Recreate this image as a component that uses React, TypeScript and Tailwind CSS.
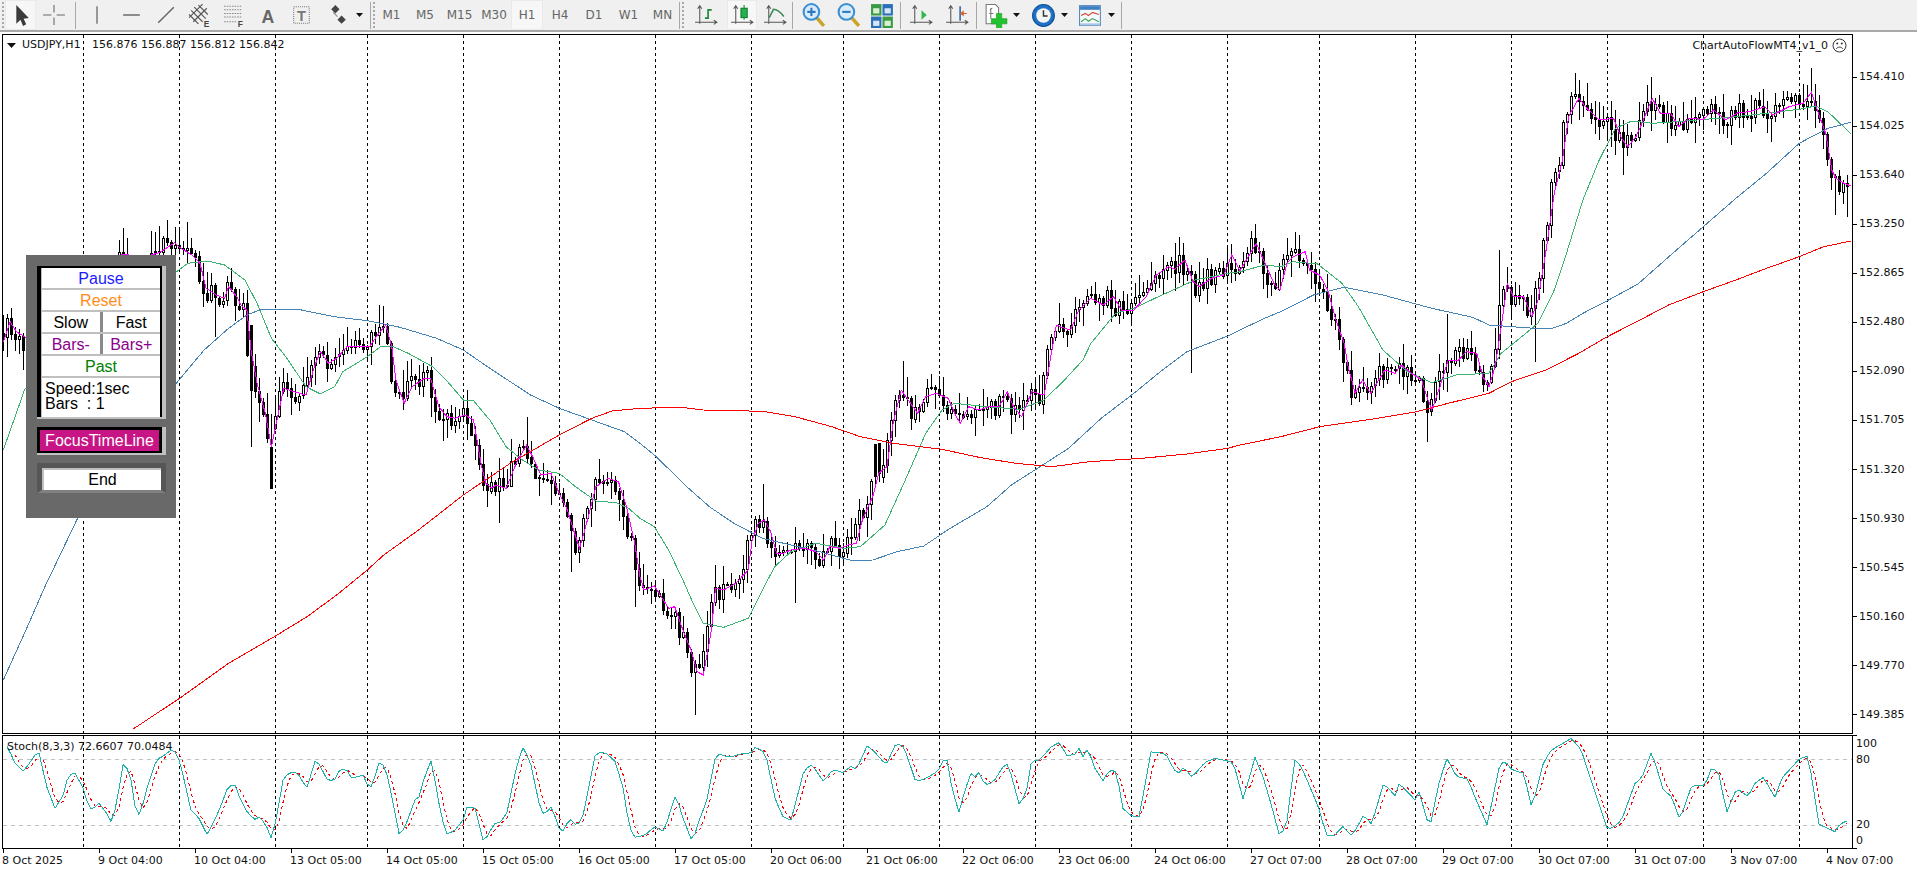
import React from "react";

type P = [number, number];
const Z8 = (a: number[]) => toPts(a, (x, y) => [x / 2.45, y / 3 + 210]);
const Z9 = (a: number[]) => toPts(a, (x, y) => [x / 2.45 + 640, y / 3 + 210]);
const Z10 = (a: number[]) => toPts(a, (x, y) => [x / 2.45 + 1240, y / 3 + 60]);
const Z5 = (a: number[]) => toPts(a, (x, y) => [x / 3, y / 3 + 720]);
const Z11 = (a: number[]) => toPts(a, (x, y) => [x / 2.529 + 380, y / 3 + 730]);
const Z12 = (a: number[]) => toPts(a, (x, y) => [x / 2.529 + 1000, y / 3 + 730]);
const Z6 = (a: number[]) => toPts(a, (x, y) => [x / 3 + 1600, y / 3 + 720]);
function toPts(a: number[], f: (x: number, y: number) => P): P[] {
  const r: P[] = [];
  for (let i = 0; i < a.length; i += 2) r.push(f(a[i], a[i + 1]));
  return r;
}

const pink: P[] = [
  ...Z8([8,395,25,335,40,365,60,380,100,420,260,420,282,200,298,132,315,132,330,195,355,195,370,135,390,128,428,98,440,112,470,135,490,160,505,235,530,255,550,265,560,230,580,260,590,285,605,300,615,420,630,520,650,610,665,710,680,620,695,535,720,545,750,555,770,470,785,425,805,460,825,445,850,410,880,410,905,410,925,375,945,345,960,410,970,510,990,580,1010,530,1040,505,1055,505,1075,590,1095,620,1115,625,1140,615,1160,630,1180,770,1190,820,1205,835,1215,825,1240,835,1265,760,1290,705,1305,740,1325,795,1350,790,1370,850,1390,900,1405,960,1420,1015,1435,950,1460,830,1490,805,1515,815,1535,890,1555,1000]),
  ...Z9([0,1100,10,1140,35,1128,55,1165,70,1195,85,1190,105,1260,125,1320,140,1385,155,1395,165,1330,175,1260,185,1135,205,1140,235,1120,265,1080,275,990,290,940,305,930,320,965,335,1030,350,1030,370,1020,405,1015,430,1025,450,1050,465,1010,490,1015,510,1005,530,1000,545,930,570,860,585,790,605,770,620,640,640,540,660,575,680,610,700,560,725,550,755,565,775,620,785,640,805,590,830,600,855,590,880,590,900,545,915,590,935,620,960,545,990,555,1005,450,1020,345,1040,355,1055,360,1075,300,1105,265,1135,285,1160,260,1180,300,1210,300,1240,260,1265,195,1295,170,1310,178,1335,150,1355,215,1370,230,1400,205,1430,195,1450,135,1470,182,1510,100,1535,170,1555,225]),
  ...Z10([98,690,115,610,130,590,160,575,170,630,195,645,215,690,235,780,255,850,265,920,282,1000,300,960,320,1000,340,960,355,930,380,940,395,915,420,940,445,960,455,1000,470,1050,490,980,510,900,535,900,555,875,580,880,595,950,610,980,625,920,640,800,655,670,670,710,695,710,715,770,730,720,750,570,770,400,790,300,805,170,830,115,850,145,880,180,915,175,935,235,950,260,970,230,985,190,1010,115,1030,160,1055,160,1075,200,1100,175,1135,178,1160,150,1190,180,1220,158,1250,155,1285,140,1305,165,1345,140,1380,130,1400,97,1420,170,1435,220,1450,330,1460,355,1480,370,1497,378]),
];
const green: P[] = [
  ...Z8([8,720,60,540,190,300,300,220,435,183,460,160,510,153,550,165,600,210,630,280,665,385,700,440,750,530,785,552,820,530,840,485,900,440,935,408,960,408,1000,430,1060,470,1100,520,1135,570,1160,572,1200,630,1240,710,1280,750,1320,780,1370,790,1410,830,1460,873,1510,878,1540,895]),
  ...Z9([0,925,35,950,70,1020,105,1110,130,1180,155,1240,205,1252,265,1225,300,1140,330,1070,370,1025,430,1000,500,1015,540,1010,600,945,650,810,700,670,740,600,770,580,850,590,930,598,990,570,1040,510,1085,450,1105,400,1165,310,1210,295,1270,260,1360,210,1440,190]),
  ...Z10([0,635,60,615,100,620,130,605,190,612,250,670,290,740,350,870,410,935,470,968,530,945,610,940,640,880,680,840,730,790,770,690,800,580,840,420,880,300,920,205,960,183,1010,190,1070,185,1140,178,1200,172,1290,160,1370,148,1410,138,1440,155,1470,190,1497,222]),
];
const blue: P[] = [
  ...Z8([8,1410,60,1270,110,1130,190,925,435,515,500,420,560,355,605,315,640,298,730,298,820,320,900,332,980,352,1070,385,1135,420,1200,475,1300,555,1370,595,1450,630,1530,665]),
  ...Z9([0,700,40,740,110,825,170,890,230,940,300,985,370,1005,440,1025,520,1052,570,1050,630,1025,695,1008,760,955,850,890,910,825,980,770,1050,715,1130,625,1210,550,1280,480,1340,425,1440,378]),
  ...Z10([0,810,60,775,105,752,180,705,255,682,350,705,470,745,570,772,610,795,720,805,765,805,800,790,840,760,900,722,975,672,1060,580,1135,500,1215,415,1290,340,1370,250,1440,205,1497,187]),
];
const red: P[] = [
  ...Z8([325,1558,440,1465,560,1360,675,1278,755,1218,830,1150,900,1080,940,1035,1020,965,1135,855,1250,760,1370,675,1450,625,1500,603]),
  ...Z9([0,595,100,592,155,600,300,604,380,620,470,650,540,680,620,700,740,718,830,742,920,760,1010,770,1100,755,1230,745,1340,732,1440,715]),
  ...Z10([0,1155,100,1130,195,1100,310,1080,430,1056,510,1030,610,1000,665,965,750,930,830,880,900,830,980,780,1050,735,1135,695,1215,660,1290,625,1370,590,1430,560,1497,543]),
];
const stochK: P[] = [
  ...Z5([10,65,25,85,45,130,70,155,95,120,115,90,140,200,165,265,190,225,205,165,225,160,250,205,265,258,275,270,297,250,320,280,335,308,350,250,370,128,390,160,408,278,420,285,445,190,470,118,490,108,520,85,540,125,575,280,590,282,622,345,660,265,685,198,705,195,720,235,745,282,765,298,780,290,800,320,815,358,830,290,850,175,865,160,890,155,920,205,948,115,985,185,1010,175,1020,145,1040,150,1055,175,1090,165,1105,202,1115,200]),
  ...Z11([0,90,15,120,30,200,50,322,70,270,90,205,100,200,110,150,130,90,155,260,170,313,190,300,210,270,220,232,240,233,262,337,290,280,305,278,322,245,345,110,362,52,380,95,405,235,415,255,435,228,450,290,462,305,480,265,495,285,510,275,525,190,545,70,570,67,595,95,615,175,630,290,645,322,670,315,695,290,718,305,748,193,765,260,790,337,810,260,825,220,850,70,885,82,910,72,940,68,950,50,975,70,1000,210,1020,262,1040,270,1072,122,1092,103,1122,155,1145,118,1170,128,1192,108,1205,118,1232,47,1250,65,1280,105,1305,40,1325,50,1355,155,1375,148,1410,125,1425,90,1435,90,1447,180,1465,248,1478,185,1495,130,1505,140,1515,128,1530,165,1550,158]),
  ...Z12([0,125,15,97,25,120,50,230,70,170,80,90,100,90,130,50,150,38,170,78,190,72,200,55,210,80,222,55,240,115,262,155,275,120,295,125,310,235,335,260,352,260,382,65,420,72,440,120,455,130,465,110,485,142,520,95,545,85,590,97,615,208,645,82,665,140,685,220,708,322,725,280,745,90,760,105,780,160,805,230,825,315,850,315,865,287,890,318,920,255,940,283,970,160,1000,198,1010,160,1050,210,1060,185,1080,270,1090,275,1110,160,1130,85,1155,140,1185,148,1195,185,1232,285,1262,115,1275,90,1295,120,1325,130,1345,235,1375,95,1395,60,1445,25,1470,60,1500,170,1537,300]),
  ...Z6([45,318,65,300,105,190,125,175,155,95,190,210,215,230,240,300,275,197,315,197,335,143,355,155,380,277,410,205,445,230,465,190,490,172,525,232,545,175,600,115,625,108,657,313,705,335,720,312,752,298]),
];

function at(pts: P[], x: number): number {
  if (x <= pts[0][0]) return pts[0][1];
  for (let i = 1; i < pts.length; i++) {
    if (x <= pts[i][0]) {
      const [x0, y0] = pts[i - 1];
      const [x1, y1] = pts[i];
      return y0 + ((y1 - y0) * (x - x0)) / Math.max(x1 - x0, 0.001);
    }
  }
  return pts[pts.length - 1][1];
}
const poly = (pts: P[]) => pts.map((p) => `${p[0].toFixed(1)},${p[1].toFixed(1)}`).join(" ");

function rng(seed: number) {
  return () => {
    seed |= 0;
    seed = (seed + 0x6d2b79f5) | 0;
    let t = Math.imul(seed ^ (seed >>> 15), 1 | seed);
    t = (t + Math.imul(t ^ (t >>> 7), 61 | t)) ^ t;
    return ((t ^ (t >>> 14)) >>> 0) / 4294967296;
  };
}

const BARS = 462;
const xOf = (i: number) => 3 + 4 * i;
const extremes: P[] = [[123,228],[119,240],[127,238],[151,235],[156,232],[160,226],[167,229],[188,222],[215,337],[251,447],[380,305],[500,523],[527,417],[571,572],[636,607],[694,715],[763,484],[795,603],[903,361],[1191,373],[1255,224],[1428,442],[1447,314],[1499,250],[1535,362],[1575,73],[1624,175],[1651,77],[1667,143],[1771,142],[1811,68],[1836,215],[1848,217]];
const bodyOverride: [number, number, number][] = [[251,325,390],[271,447,488],[876,444,476],[880,443,473]];

function buildCandles() {
  const r = rng(20251104);
  const o: number[] = [], c: number[] = [], h: number[] = [], l: number[] = [];
  for (let i = 0; i < BARS; i++) {
    const x = xOf(i);
    const raw = at(pink, x + 4) + (r() - 0.5) * 19;
    const cl = x > 20 && x < 118 ? 350 : x > 128 && x < 148 ? Math.max(raw, 285) : raw;
    const op = i === 0 ? cl - 4 : c[i - 1];
    c.push(cl);
    o.push(op);
    const a = r(), b = r();
    h.push(Math.min(op, cl) - a * a * 20 - 2);
    l.push(Math.max(op, cl) + b * b * 20 + 2);
  }
  for (const [x, top, bot] of bodyOverride) {
    const i = Math.round((x - 3) / 4);
    o[i] = top; c[i] = bot;
    h[i] = Math.min(h[i], top); l[i] = Math.max(l[i], bot);
  }
  for (const [x, y] of extremes) {
    const i = Math.round((x - 3) / 4);
    if (y < (o[i] + c[i]) / 2) h[i] = Math.min(h[i], y);
    else l[i] = Math.max(l[i], y);
  }
  let wicks = "", bull = "", bear = "";
  for (let i = 0; i < BARS; i++) {
    const X = xOf(i) + 0.5;
    wicks += `M${X} ${Math.round(h[i])}V${Math.round(l[i])}`;
    const t = Math.round(Math.min(o[i], c[i])) + 0.5;
    const hh = Math.max(Math.round(Math.abs(o[i] - c[i])), 1);
    const d = `M${X - 1} ${t}h2v${hh}h-2z`;
    if (c[i] < o[i]) bull += d; else bear += d;
  }
  return { wicks, bull, bear };
}
const candles = buildCandles();

const kPts: P[] = [];
const dPts: P[] = [];
for (let i = 0; i < BARS; i++) {
  const x = xOf(i);
  if (x < 4) continue;
  const k = at(stochK, x);
  kPts.push([x, k]);
  if (i > 2) dPts.push([x, (at(stochK, x) + at(stochK, x - 4) + at(stochK, x - 8)) / 3]);
}

const seps = [83,179,275,367,463,559,655,751,843,939,1035,1131,1227,1319,1415,1511,1607,1703,1799];
const prices = ["154.410","154.025","153.640","153.250","152.865","152.480","152.090","151.705","151.320","150.930","150.545","150.160","149.770","149.385"];
const dates = ["8 Oct 2025","9 Oct 04:00","10 Oct 04:00","13 Oct 05:00","14 Oct 05:00","15 Oct 05:00","16 Oct 05:00","17 Oct 05:00","20 Oct 06:00","21 Oct 06:00","22 Oct 06:00","23 Oct 06:00","24 Oct 06:00","27 Oct 07:00","28 Oct 07:00","29 Oct 07:00","30 Oct 07:00","31 Oct 07:00","3 Nov 07:00","4 Nov 07:00"];

const Axes = () => (
  <g stroke="#555" strokeWidth="1" fill="none">
    <path d="M6.5 4V21M4.5 6.5L6.5 3.5L8.5 6.5M2 19.5H23M20 17.5L23 19.5L20 21.5" />
  </g>
);

const icons: Record<string, React.ReactNode> = {
  cursor: <path d="M8 3L8 21L12 17L14.5 23L17.5 21.5L15 16L20 15.5Z" fill="#3a3a3a" />,
  cross: <path d="M12.5 3V10M12.5 15V22M2 12.5H10M15 12.5H23" stroke="#666" fill="none" />,
  vline: <path d="M12.5 4V21" stroke="#777" strokeWidth="1.4" />,
  hline: <path d="M4 12.5H20" stroke="#666" strokeWidth="1.4" />,
  trend: <path d="M5 20L20 5" stroke="#666" strokeWidth="1.4" />,
  channel: (
    <g>
      <path d="M2 15L15 2M6 19L19 6M4 8L15 19M7 5L18 16M2 12L11 21M11 3L20 12" stroke="#555" strokeWidth="1.1" fill="none" />
      <text x="16" y="24" fontSize="8" fontWeight="700" fill="#444" fontFamily="Liberation Sans">E</text>
    </g>
  ),
  fibo: (
    <g>
      <path d="M3 4H20M3 7.5H20M3 11H20M3 14.5H20M3 19H15" stroke="#888" strokeDasharray="1.5 1" fill="none" />
      <text x="16" y="24" fontSize="8" fontWeight="700" fill="#444" fontFamily="Liberation Sans">F</text>
    </g>
  ),
  letter: <text x="12.5" y="20" textAnchor="middle" fontSize="17" fontWeight="700" fill="#666" fontFamily="Liberation Sans">A</text>,
  textbox: (
    <g>
      <rect x="4.5" y="4.5" width="15" height="16" fill="none" stroke="#777" strokeDasharray="1 1" />
      <text x="12" y="18" textAnchor="middle" fontSize="14" fontWeight="700" fill="#777" fontFamily="Liberation Sans">T</text>
    </g>
  ),
  arrows: (
    <g>
      <path d="M9 3L13 7L9 11L5 7Z" fill="#444" />
      <path d="M15 13L19 17L15 21L11 17Z" fill="#444" />
      <path d="M7 10L11 14" stroke="#888" />
    </g>
  ),
  bar: (
    <g>
      <Axes />
      <path d="M11.5 15.5H14.5V7.5H18" stroke="#1a8a3a" strokeWidth="1.6" fill="none" />
    </g>
  ),
  candle: (
    <g>
      <Axes />
      <path d="M14.5 3V17" stroke="#0f7a2c" />
      <rect x="11.5" y="6" width="6" height="9" fill="#22b14c" stroke="#0f7a2c" />
    </g>
  ),
  line: (
    <g>
      <Axes />
      <path d="M7 15L11 7C14 7 18 10 21 14" stroke="#3c8a55" strokeWidth="1.5" fill="none" />
    </g>
  ),
  zoomIn: (
    <g>
      <path d="M15 15L22 23" stroke="#c9a428" strokeWidth="3.4" />
      <circle cx="10" cy="9.5" r="7.5" fill="#d8ecfb" stroke="#3c8fd0" strokeWidth="2" />
      <path d="M6 9.5H14M10 5.5V13.5" stroke="#2d78c0" strokeWidth="2" />
    </g>
  ),
  zoomOut: (
    <g>
      <path d="M15 15L22 23" stroke="#c9a428" strokeWidth="3.4" />
      <circle cx="10" cy="9.5" r="7.5" fill="#d8ecfb" stroke="#3c8fd0" strokeWidth="2" />
      <path d="M6 9.5H14" stroke="#2d78c0" strokeWidth="2" />
    </g>
  ),
  tile: (
    <g>
      <rect x="1" y="2" width="10" height="11" fill="#3a9a46" />
      <rect x="12" y="2" width="10" height="11" fill="#2a6fb8" />
      <rect x="1" y="14" width="10" height="11" fill="#2a6fb8" />
      <rect x="12" y="14" width="10" height="11" fill="#3a9a46" />
      <rect x="3" y="6" width="6" height="5" fill="#d6f0d0" />
      <rect x="14" y="6" width="6" height="5" fill="#d5e6f7" />
      <rect x="3" y="18" width="6" height="5" fill="#d5e6f7" />
      <rect x="14" y="18" width="6" height="5" fill="#d6f0d0" />
    </g>
  ),
  autoscroll: (
    <g>
      <Axes />
      <path d="M13 8L18 12.5L13 17Z" fill="#2fb84f" />
    </g>
  ),
  shift: (
    <g>
      <Axes />
      <path d="M15.5 4V18" stroke="#3a6ea8" strokeWidth="1.6" />
      <path d="M22 10.5H19V8L15.5 11L19 14V11.5H22Z" fill="#d9602a" />
    </g>
  ),
  newChart: (
    <g>
      <path d="M3 2.5H12L15 5.5V21H3Z" fill="#fff" stroke="#777" />
      <path d="M7 8C7 6 9 6 9 6M6 11H10M7.5 6V16" stroke="#777" fill="none" />
      <path d="M13 11H18V16H23V21H18V26H13V21H8V16H13Z" fill="#22c32e" stroke="#149a20" strokeWidth="0.6" />
    </g>
  ),
  clock: (
    <g>
      <circle cx="12" cy="13" r="10.5" fill="#1f6fc4" stroke="#0e4f97" />
      <circle cx="12" cy="13" r="7" fill="#f4f4f4" />
      <path d="M12 8V13.5H16" stroke="#333" strokeWidth="1.4" fill="none" />
    </g>
  ),
  indicator: (
    <g>
      <rect x="1.5" y="3.5" width="20" height="19" fill="#f4f8fc" stroke="#4f86bd" />
      <rect x="2" y="4" width="19" height="3.5" fill="#3d7fc4" />
      <path d="M3 13L7 11L10 13L14 10L20 12" stroke="#d6492b" fill="none" />
      <path d="M3 19L7 16L10 18.5L14 16L20 19" stroke="#3aa34a" fill="none" />
      <rect x="2" y="20.5" width="19" height="2" fill="#a9c7e6" />
    </g>
  ),
};

function Icon({ name, size = 26 }: { name: string; size?: number }) {
  return (
    <svg width={size} height={size} viewBox="0 0 25 25" className="shrink-0">
      {icons[name]}
    </svg>
  );
}
const Caret = () => (
  <svg width="7" height="4" viewBox="0 0 7 4" className="ml-[4px] shrink-0">
    <path d="M0 0H7L3.5 4Z" fill="#111" />
  </svg>
);
const Sep = () => <div className="h-[27px] w-px shrink-0 bg-[#a8a8a8]" />;
const Grip = () => <div className="ml-[2px] h-[26px] w-[2px] shrink-0 border-l-2 border-dotted border-[#a9a9a9]" />;

function Btn({ w, active, children }: { w: string; active?: boolean; children: React.ReactNode }) {
  return (
    <div
      className={
        "flex h-[30px] shrink-0 items-center justify-center " +
        w +
        (active ? " border border-[#eaeaea] bg-[#f7f7f7]" : "")
      }
    >
      {children}
    </div>
  );
}
function TF({ t, w, active }: { t: string; w: string; active?: boolean }) {
  return (
    <Btn w={w} active={active}>
      <span className="text-[12px] text-[#666]">{t}</span>
    </Btn>
  );
}

function Toolbar() {
  return (
    <div className="flex h-[30px] items-center bg-[#f0f0f0]">
      <Grip />
      <div className="w-[1px]" />
      <Btn w="w-[31px]" active><Icon name="cursor" /></Btn>
      <Btn w="w-[36px]"><Icon name="cross" /></Btn>
      <div className="w-[3px]" />
      <Sep />
      <div className="w-[2px]" />
      <Btn w="w-[37px]"><Icon name="vline" /></Btn>
      <Btn w="w-[34px]"><Icon name="hline" /></Btn>
      <Btn w="w-[34px]"><Icon name="trend" /></Btn>
      <Btn w="w-[34px]"><Icon name="channel" /></Btn>
      <Btn w="w-[34px]"><Icon name="fibo" /></Btn>
      <Btn w="w-[34px]"><Icon name="letter" /></Btn>
      <Btn w="w-[34px]"><Icon name="textbox" /></Btn>
      <Btn w="w-[51px]"><Icon name="arrows" /><Caret /></Btn>
      <Sep />
      <Grip />
      <Btn w="w-[33px]"><span className="text-[12px] text-[#666]">M1</span></Btn>
      <TF t="M5" w="w-[34px]" />
      <TF t="M15" w="w-[35px]" />
      <TF t="M30" w="w-[34px]" />
      <TF t="H1" w="w-[32px]" active />
      <TF t="H4" w="w-[34px]" />
      <TF t="D1" w="w-[34px]" />
      <TF t="W1" w="w-[35px]" />
      <TF t="MN" w="w-[33px]" />
      <Sep />
      <Grip />
      <div className="w-[1px]" />
      <Btn w="w-[42px]"><Icon name="bar" /></Btn>
      <Btn w="w-[30px]" active><Icon name="candle" /></Btn>
      <Btn w="w-[35px]"><Icon name="line" /></Btn>
      <Sep />
      <div className="w-[3px]" />
      <Btn w="w-[36px]"><Icon name="zoomIn" /></Btn>
      <Btn w="w-[34px]"><Icon name="zoomOut" /></Btn>
      <Btn w="w-[34px]"><Icon name="tile" /></Btn>
      <Sep />
      <div className="w-[1px]" />
      <Btn w="w-[37px]"><Icon name="autoscroll" /></Btn>
      <Btn w="w-[35px]"><Icon name="shift" /></Btn>
      <div className="w-[2px]" />
      <Sep />
      <Btn w="w-[49px]"><Icon name="newChart" /><Caret /></Btn>
      <Btn w="w-[47px]"><Icon name="clock" /><Caret /></Btn>
      <Btn w="w-[47px]"><Icon name="indicator" /><Caret /></Btn>
      <div className="w-[1px]" />
      <Sep />
    </div>
  );
}

function PanelRow({ color, children }: { color: string; children: React.ReactNode }) {
  return (
    <div className={"flex h-[20px] items-center justify-center bg-white pt-px text-[16px] leading-none " + color}>
      {children}
    </div>
  );
}

function ControlPanel() {
  return (
    <div className="absolute left-[23px] top-[220px] flex h-[263px] w-[150px] flex-col bg-[#696969] pl-[11px] pr-[10px] pt-[11px] font-['Liberation_Sans',sans-serif]">
      <div className="flex flex-col border-b-2 border-r-[4px] border-b-[#c0c0c0] border-r-[#c0c0c0]">
        <div className="border-l-[4px] border-r-[2px] border-t-2 border-black bg-[#c0c0c0]">
          <div className="flex flex-col gap-[2px] pl-px">
            <PanelRow color="text-[#1c1cff]">Pause</PanelRow>
            <PanelRow color="text-[#ff8c1a]">Reset</PanelRow>
            <div className="grid grid-cols-2 gap-[3px] bg-[#8a8a8a]">
              <PanelRow color="text-black">Slow</PanelRow>
              <PanelRow color="text-black">Fast</PanelRow>
            </div>
            <div className="grid grid-cols-2 gap-[3px] bg-[#8a8a8a]">
              <PanelRow color="text-[#8b008b]">Bars-</PanelRow>
              <PanelRow color="text-[#8b008b]">Bars+</PanelRow>
            </div>
            <PanelRow color="text-[#008000]">Past</PanelRow>
            <div className="flex h-[39px] flex-col bg-white pl-[3px] pt-[3px] text-[16px] leading-[15px] text-black">
              <span>Speed:1sec</span>
              <span className="whitespace-pre">Bars  : 1</span>
            </div>
          </div>
        </div>
      </div>
      <div className="mt-[8px] flex h-[28px] flex-col border-b-2 border-r-[4px] border-b-[#c0c0c0] border-r-[#c0c0c0]">
        <div className="flex flex-1 items-center justify-center border-[3px] border-b-2 border-black bg-[#c71585] text-[16px] text-white">
          FocusTimeLine
        </div>
      </div>
      <div className="mt-[8px] flex h-[30px] border-x-[5px] border-b-[3px] border-t-[5px] border-x-[#565656] border-b-[#808080] border-t-[#565656]">
        <div className="flex flex-1 items-center justify-center border-l-2 border-t-2 border-[#c0c0c0] bg-white text-[16px] text-black">
          End
        </div>
      </div>
    </div>
  );
}

export default function App() {
  return (
    <div className="h-[871px] w-[1917px] overflow-hidden bg-white font-['DejaVu_Sans',sans-serif] text-[11px] leading-[14px] text-[#111]">
      <Toolbar />
      <div className="h-[2px] bg-[#a9a9a9]" />
      <div className="h-[2px]" />
      <div className="flex pl-[2px]">
        <div className="flex w-[1851px] shrink-0 flex-col">
          <div className="relative h-[700px] w-[1851px] border border-black">
            <svg className="absolute inset-0 h-full w-full" viewBox="3 35 1849 698">
              <g stroke="#000" strokeDasharray="3 3" shapeRendering="crispEdges">
                {seps.map((x) => (
                  <line key={x} x1={x + 0.5} x2={x + 0.5} y1={35} y2={733} />
                ))}
              </g>
              <g shapeRendering="crispEdges">
                <path d={candles.wicks} stroke="#000" fill="none" />
                <path d={candles.bear} stroke="#000" fill="#000" />
                <path d={candles.bull} stroke="#000" fill="#fff" />
              </g>
              <g fill="none" shapeRendering="crispEdges">
                <polyline points={poly(green)} stroke="#3cb371" />
                <polyline points={poly(blue)} stroke="#4682b4" />
                <polyline points={poly(red)} stroke="#ff0000" />
                <polyline points={poly(pink)} stroke="#ff00ff" />
              </g>
            </svg>
            <div className="absolute left-[4px] top-[3px] flex items-center">
              <svg width="9" height="5" viewBox="0 0 9 5" className="mr-[6px]">
                <path d="M0 0H9L4.5 5Z" fill="#111" />
              </svg>
              <span className="w-[70px]">USDJPY,H1</span>
              <span>156.876 156.887 156.812 156.842</span>
            </div>
            <div className="absolute right-[5px] top-[3px] flex items-center gap-[4px]">
              <span>ChartAutoFlowMT4_v1_0</span>
              <svg width="15" height="15" viewBox="0 0 15 15">
                <circle cx="7.5" cy="7.5" r="6.5" fill="none" stroke="#333" />
                <circle cx="5.2" cy="5.6" r="1" fill="#333" />
                <circle cx="9.8" cy="5.6" r="1" fill="#333" />
                <path d="M4.3 10.8C5.4 8.6 9.6 8.6 10.7 10.8" fill="none" stroke="#333" />
              </svg>
            </div>
            <ControlPanel />
          </div>
          <div className="h-px" />
          <div className="relative h-[114px] w-[1851px] border border-black">
            <svg className="absolute inset-0 h-full w-full" viewBox="3 736 1849 112">
              <g stroke="#c0c0c0" strokeDasharray="4 4" shapeRendering="crispEdges">
                <line x1="3" x2="1852" y1="759.5" y2="759.5" />
                <line x1="3" x2="1852" y1="825.5" y2="825.5" />
              </g>
              <g stroke="#000" strokeDasharray="3 3" shapeRendering="crispEdges">
                {seps.map((x) => (
                  <line key={x} x1={x + 0.5} x2={x + 0.5} y1={736} y2={848} />
                ))}
              </g>
              <g fill="none" shapeRendering="crispEdges">
                <polyline points={poly(dPts)} stroke="#ff0000" strokeDasharray="3 3" />
                <polyline points={poly(kPts)} stroke="#20b2aa" />
              </g>
            </svg>
            <span className="absolute left-[4px] top-[4px]">Stoch(8,3,3) 72.6607 70.0484</span>
          </div>
          <div className="flex pl-[1px]">
            {dates.map((d) => (
              <div key={d} className="w-[96px] shrink-0 whitespace-nowrap">
                <div className="h-[4px] w-px bg-black" />
                <div className="-ml-px mt-[1px]">{d}</div>
              </div>
            ))}
          </div>
        </div>
        <div className="flex w-[64px] shrink-0 flex-col">
          <div className="flex h-[700px] flex-col">
            <div className="mt-[36px] flex h-[652px] flex-col justify-between">
              {prices.map((p) => (
                <div key={p} className="flex h-[14px] items-center">
                  <div className="h-px w-[4px] bg-black" />
                  <span className="ml-[2px]">{p}</span>
                </div>
              ))}
            </div>
          </div>
          <div className="h-px" />
          <div className="flex h-[114px] flex-col">
            <div className="h-px w-[4px] bg-black" />
            <div className="ml-[3px] mt-[1px]">100</div>
            <div className="ml-[3px] mt-[1.5px]">80</div>
            <div className="ml-[3px] mt-[51.5px]">20</div>
            <div className="ml-[3px] mt-[1.5px]">0</div>
            <div className="flex-1" />
            <div className="h-px w-[4px] bg-black" />
          </div>
        </div>
      </div>
    </div>
  );
}
